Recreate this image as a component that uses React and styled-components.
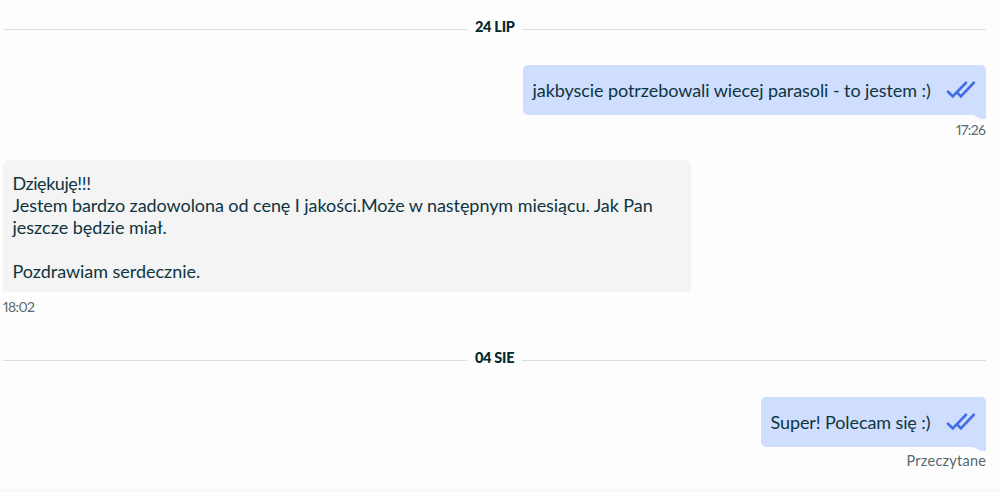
import React from "react";
import styled, { createGlobalStyle } from "styled-components";

const GlobalStyle = createGlobalStyle`
  * { box-sizing: border-box; }
  body {
    margin: 0;
    background: #fdfdfd;
    font-family: Lato, "Open Sans", sans-serif;
    color: #0e353f;
  }
`;

const Conversation = styled.main`
  height: 491px;
  padding: 15px 14px 0 3px;
  border-bottom: 1px solid #f3f4f4;
  display: flex;
  flex-direction: column;
  overflow: hidden;
`;

const DateDivider = styled.div`
  display: flex;
  align-items: center;
  gap: 8px;
  height: 23px;
  margin-bottom: ${(p) => p.$after}px;
  &::before, &::after {
    content: "";
    flex: 1;
    height: 1px;
    margin-top: 6px;
    background: #d5e0e2;
  }
`;

const DateLabel = styled.span`
  width: 39px;
  white-space: nowrap;
  font-size: 14.5px;
  font-weight: 900;
  line-height: 23px;
  letter-spacing: -0.3px;
  color: #02282c;
`;

const Message = styled.article`
  display: flex;
  flex-direction: column;
  align-items: ${(p) => (p.$own ? "flex-end" : "flex-start")};
  margin-bottom: ${(p) => p.$after || 0}px;
`;

const Bubble = styled.div`
  position: relative;
  display: flex;
  align-items: center;
  background: ${(p) => (p.$own ? "#cfdefe" : "#f4f4f4")};
  border-radius: ${(p) => (p.$own ? "5px 5px 0 5px" : "5px 5px 5px 0")};
  width: ${(p) => p.$width}px;
  height: ${(p) => p.$height}px;
  padding: ${(p) => p.$offset || 0}px 10px 0 9.5px;
`;

const Text = styled.div`
  flex: 1;
  font-size: 18px;
  line-height: 22px;
`;

const Line = styled.div`
  min-height: 22px;
  white-space: pre;
  letter-spacing: ${(p) => p.$tracking || 0}px;
`;

const Checks = styled.svg`
  flex: none;
  width: 30px;
  height: 20px;
  margin-bottom: 1px;
`;

const Tail = styled.svg`
  position: absolute;
  top: 100%;
  right: 0;
  width: 15px;
  height: 4px;
`;

const Meta = styled.div`
  margin-top: ${(p) => p.$gap || 5}px;
  height: 20px;
  font-size: 14.5px;
  line-height: 20px;
  color: #55696c;
  letter-spacing: ${(p) => p.$tracking || 0}px;
  margin-right: ${(p) => -(p.$tracking || 0)}px;
  ${(p) => p.$time && "font-size: 14px; font-variant-numeric: proportional-nums;"}
`;

function ReadChecks() {
  return (
    <Checks viewBox="0 0 30 20" fill="none" stroke="#416ee5" strokeWidth="2.7" strokeLinecap="round">
      <path d="M2 11.7 L6.8 16.4 L20 2.8" />
      <path d="M11.3 12.6 L14.9 16.4 L27.8 2.8" />
    </Checks>
  );
}

function OwnMessage({ text, tracking, width, meta, metaTracking, metaGap, time, after }) {
  return (
    <Message $own $after={after}>
      <Bubble $own $width={width} $height={50}>
        <Text><Line $tracking={tracking}>{text}</Line></Text>
        <ReadChecks />
        <Tail viewBox="0 0 15 4"><path d="M0 0 H15 V4 H12 C7 4 6 0.4 0 0Z" fill="#cfdefe" /></Tail>
      </Bubble>
      <Meta $tracking={metaTracking} $gap={metaGap} $time={time}>{meta}</Meta>
    </Message>
  );
}

export default function App() {
  return (
    <>
      <GlobalStyle />
      <Conversation>
        <DateDivider $after={27}><DateLabel>24 LIP</DateLabel></DateDivider>
        <OwnMessage
          text="jakbyscie potrzebowali wiecej parasoli - to jestem :)"
          tracking={-0.07}
          width={463}
          meta="17:26"
          metaTracking={-0.6}
          time
          after={20}
        />
        <Message $after={29}>
          <Bubble $width={688} $height={132} $offset={1}>
            <Text>
              <Line $tracking={-0.45}>Dziękuję!!!</Line>
              <Line $tracking={-0.065}>Jestem bardzo zadowolona od cenę I jakości.Może w następnym miesiącu. Jak Pan</Line>
              <Line>jeszcze będzie miał.</Line>
              <Line />
              <Line $tracking={-0.04}>Pozdrawiam serdecznie.</Line>
            </Text>
          </Bubble>
          <Meta $tracking={-0.6} $time>18:02</Meta>
        </Message>
        <DateDivider $after={28}><DateLabel>04 SIE</DateLabel></DateDivider>
        <OwnMessage text="Super! Polecam się :)" tracking={-0.1} width={225} meta="Przeczytane" metaTracking={0.25} metaGap={4} />
      </Conversation>
    </>
  );
}
